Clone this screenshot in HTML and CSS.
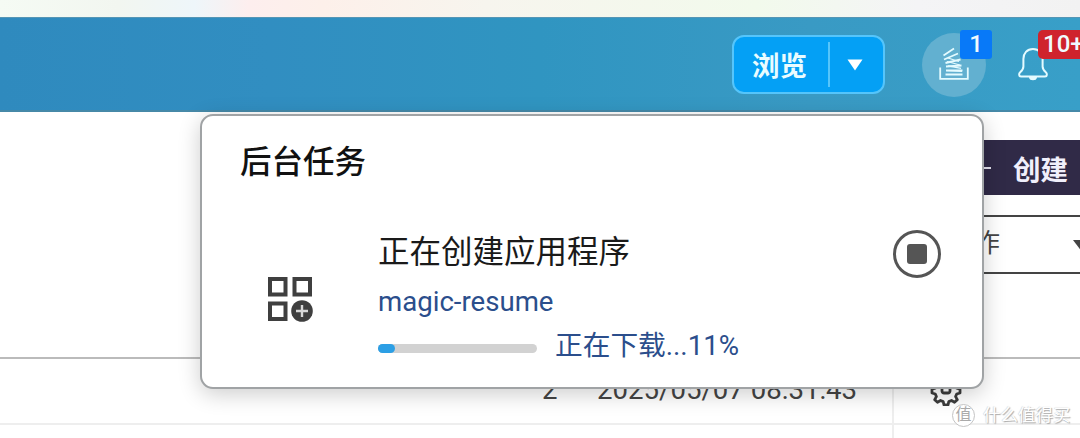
FILE: index.html
```html
<!DOCTYPE html>
<html lang="zh-CN">
<head>
    <meta charset="UTF-8">
    <meta name="viewport" content="width=device-width, initial-scale=1.0">
    <title>后台任务</title>
    <link rel="stylesheet" href="styles.css">
</head>
<body>
    <div class="browser-strip"></div>

    <header class="topbar">
        <div class="browse">
            <span class="browse-label">浏览</span>
            <span class="browse-toggle">
                <svg width="16" height="12" viewBox="0 0 16 12"><path d="M0.5 0.5h15L8 11.5z" fill="#fff" /></svg>
            </span>
        </div>

        <div class="tasks-button">
            <!-- Stack of sheets in a tray -->
            <svg width="30" height="34" viewBox="0 0 30 34" fill="none" stroke="#e4fbff" stroke-width="1.8">
                <path d="M1.2 20.500v11.300h27.600V20.500" />
                <path d="M6.500 27.500h17M7 23.500h16.500M7 19.500l15.500-1M6.500 16l15-3.500M5 12.500l14-6M4.500 8.500L15 1.500" />
                <path d="M7 23.500l16 1M9 18.800l13 2.500M8 14.500l13 3.500M9 11l11 3.500" stroke-width="1.200" />
            </svg>
            <span class="badge badge-blue">1</span>
        </div>

        <div class="bell-button">
            <svg width="32" height="34" viewBox="0 0 32 34" fill="none" stroke="#e4fbff" stroke-width="2" stroke-linejoin="round">
                <path d="M16 2C10 2 6.4 6.3 6.4 12v7.5c0 2.7-1.2 4-3.2 5.7-1.5 1.4-1.6 4.3.8 4.3h24c2.400 0 2.300-2.900.8-4.300-2-1.700-3.200-3-3.200-5.700V12C25.600 6.300 22 2 16 2z" />
                <path d="M13 30.500c.5 2.300 5.500 2.300 6 0z" fill="#e4fbff" />
            </svg>
            <span class="badge badge-red">10+</span>
        </div>
    </header>

    <main class="content">
        <div class="toolbar">
            <div class="create-button"><span class="plus"></span>创建</div>
            <div class="action-select">
                <span>操作</span>
                <svg width="18" height="12" viewBox="0 0 18 12"><path d="M0 0h18L9 12z" fill="#444" /></svg>
            </div>
        </div>
        <div class="table-row">
            <span class="cell cell-count">2</span>
            <span class="cell cell-date">2025/05/07 08:31:43</span>
            <span class="cell cell-gear">
                <svg width="32" height="32" viewBox="-16 -16 32 32" fill="none" stroke="#3c3c3c" stroke-width="2.8" stroke-linejoin="round">
                    <path d="M-2.500-14h5l1 3.600 2.900 1.200L9.700-11l2 3.500-1.800 3 .9 2.700L14-.8V3l-3.300 1-1.100 2.600 1.700 3L8.500 12.200l-3-1.700L2.800 11.600 2 15h-4l-.8-3.400-2.700-1.100-3 1.700-2.800-2.600 1.700-3L-10.700 4-14 3V-.8l3.200-1 .9-2.700-1.800-3 2-3.500 3.300 1.800 2.900-1.200z" />
                    <rect x="-4" y="-5" width="8" height="8" rx="2" />
                </svg>
            </span>
        </div>
        <div class="table-row table-row-next"></div>
    </main>

    <section class="task-panel">
        <h2 class="panel-title">后台任务</h2>
        <div class="task">
            <svg class="task-icon" width="46" height="46" viewBox="0 0 46 46" fill="none" stroke="#3f3f3f" stroke-width="4">
                <path d="M3 3h15.500v15.500H3zM27.500 3H43v15.500H27.500zM3 27.500h15.500V43H3z" />
                <circle cx="35" cy="35" r="10.800" fill="#3f3f3f" stroke="none" />
                <path d="M35 29v12M29 35h12" stroke="#d8d8d8" stroke-width="2.400" />
            </svg>
            <div class="task-body">
                <div class="task-name">正在创建应用程序</div>
                <div class="task-app">magic-resume</div>
                <div class="task-progress">
                    <div class="progress"><div class="progress-bar" style="width: 11%"></div></div>
                    <span>正在下载...11%</span>
                </div>
            </div>
            <div class="stop-button"></div>
        </div>
    </section>

    <div class="watermark">
        <span class="watermark-logo">值</span>
        <span>什么值得买</span>
    </div>
</body>
</html>
```
FILE: styles.css
```css
* {
    box-sizing: border-box;
}

body {
    position: relative;
    width: 1080px;
    height: 438px;
    margin: 0;
    overflow: hidden;
    background: white;
    font-family: Roboto, "Noto Sans CJK SC", sans-serif;
    color: #111;
}

.browser-strip {
    height: 17px;
    background: linear-gradient(90deg, #f5fbf4 0%, #f2f6f0 11%, #eef6fa 18%, #fdeeee 23%, #fdf0ea 30%, #f7f5ee 45%, #f2faec 70%, #f4f4f6 85%, #f2f2f2 100%);
}

/* Header */
.topbar {
    display: flex;
    height: 95px;
    padding-left: 732px;
    background: linear-gradient(90deg, #2f8abe 0%, #318ec1 25%, #3095c1 50%, #399ac4 75%, #389fc8 100%);
    border-top: 1px solid #5596b5;
    border-bottom: 2px solid #4689a8;
}

.browse {
    display: flex;
    align-items: center;
    width: 153px;
    height: 59px;
    margin-top: 17px;
    background: #04a0f5;
    border: 2px solid #55c5fb;
    border-radius: 12px;
    color: #e9fcff;
    font-size: 27.5px;
    font-weight: 700;
}

.browse-label {
    width: 94px;
    padding: 5px 0 0 18px;
    line-height: 40px;
}

.browse-toggle {
    display: flex;
    align-items: center;
    height: 45px;
    padding-left: 17px;
    border-left: 2px solid #55c5fb;
}

.tasks-button {
    position: relative;
    width: 64px;
    height: 64px;
    margin: 15px 0 0 37px;
    padding: 14px 0 0 17px;
    background: #62b0d0;
    border-radius: 50%;
}

.bell-button {
    position: relative;
    width: 32px;
    margin: 29px 0 0 31px;
}

.badge {
    position: absolute;
    height: 29px;
    color: #f0faff;
    font-size: 24px;
    font-weight: 500;
    line-height: 28px;
    text-align: center;
}

.badge-blue {
    top: -3px;
    left: 38px;
    width: 32px;
    background: #0879f8;
    border-radius: 3px;
}

.badge-red {
    top: -17px;
    left: 21px;
    width: 52px;
    padding-left: 5px;
    background: #cf232d;
    border-radius: 5px;
    text-align: left;
}

/* Page behind the panel */
.content {
    display: flex;
    flex-direction: column;
}

.toolbar {
    display: flex;
    flex-direction: column;
    align-items: flex-end;
    gap: 20px;
    height: 245px;
    padding-top: 28px;
}

.create-button {
    display: flex;
    align-items: center;
    width: 120px;
    height: 55px;
    padding-left: 13px;
    background: #302a47;
    color: #f0effb;
    font-size: 27.5px;
    font-weight: 700;
}

.plus {
    width: 18px;
    height: 2px;
    margin-right: 22px;
    background: #e4e2ee;
}

.action-select {
    display: flex;
    justify-content: space-between;
    width: 160px;
    height: 59px;
    margin-right: -12px;
    padding: 2px 0 0 14px;
    border: 2px solid #444;
    border-right: 0;
    color: #444;
    font-size: 26px;
    line-height: 48px;
}

.action-select svg {
    margin: 21px 1px 0 0;
    flex: none;
}

.table-row {
    display: flex;
    height: 66px;
    border-top: 2px solid #bbb;
}

.table-row-next {
    height: 15px;
    border-top: 2px solid #eee;
}

.cell {
    padding-top: 15px;
    color: #444;
    font-size: 27.6px;
    line-height: 32px;
}

.cell-count {
    width: 597px;
    padding-left: 542px;
}

.cell-date {
    width: 295px;
    white-space: nowrap;
}

.cell-gear {
    height: 80px;
    padding: 15px 0 0 36px;
    border-left: 2px solid #eee;
}

/* Floating panel */
.task-panel {
    position: absolute;
    top: 114px;
    left: 200px;
    width: 784px;
    height: 275px;
    padding: 27px 41px 0 38px;
    background: white;
    border: 2px solid #a0a3a5;
    border-radius: 13px;
    box-shadow: 0 5px 22px rgba(0, 0, 0, 0.2);
}

.panel-title {
    margin: 0;
    font-size: 31.5px;
    font-weight: 500;
    line-height: 40px;
}

.task {
    display: flex;
    padding-top: 45px;
}

.task-icon {
    margin: 48px 65px 0 27px;
}

.task-body {
    flex: 1;
    color: #2b4e8c;
}

.task-name {
    padding-top: 2px;
    margin-bottom: 8px;
    color: #1a1a1a;
    font-size: 31.5px;
    line-height: 46px;
}

.task-app {
    height: 36px;
    font-size: 27.6px;
    line-height: 36px;
}

.task-progress {
    display: flex;
    align-items: center;
    gap: 18px;
    height: 42px;
    margin-top: 5px;
    font-size: 27.7px;
    line-height: 38px;
}

.progress {
    width: 159px;
    height: 9px;
    margin-top: 4px;
    background: #d2d2d2;
    border-radius: 5px;
}

.progress-bar {
    height: 9px;
    background: #2c9fe5;
    border-radius: 5px;
}

.stop-button {
    display: grid;
    place-items: center;
    width: 48px;
    height: 48px;
    margin-top: 2px;
    border: 3px solid #555;
    border-radius: 50%;
}

.stop-button::before {
    content: "";
    width: 20px;
    height: 20px;
    background: #555;
    border-radius: 3px;
}

/* Watermark */
.watermark {
    position: absolute;
    top: 403px;
    left: 952px;
    display: flex;
    align-items: center;
    gap: 8px;
    color: white;
    font-size: 17.5px;
    line-height: 24px;
    text-shadow: 1px 1px 1px #aaa, -0.5px -0.5px 1px #ccc;
    white-space: nowrap;
}

.watermark-logo {
    width: 23px;
    height: 23px;
    background: white;
    border: 1px solid #c4c4c4;
    border-radius: 50%;
    color: #aaa;
    font-size: 16px;
    line-height: 20px;
    text-align: center;
    text-shadow: none;
}
```
